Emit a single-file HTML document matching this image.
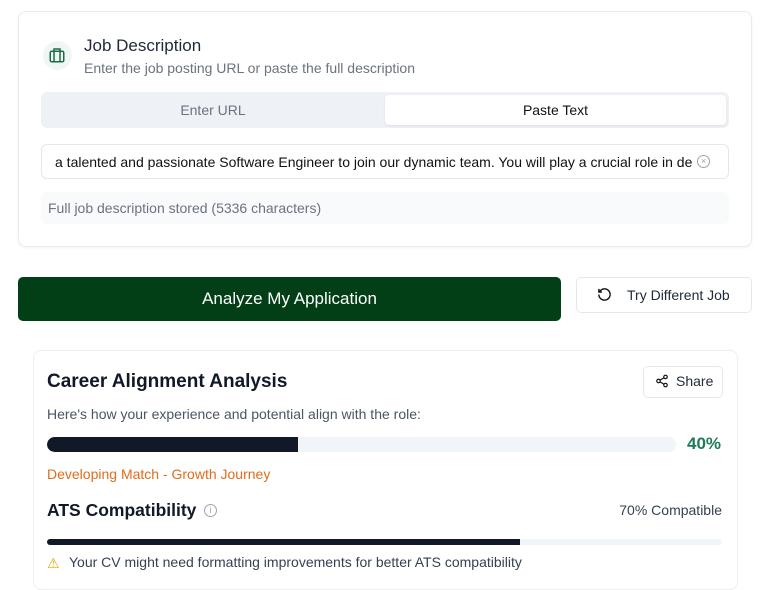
<!DOCTYPE html>
<html><head><style>
*{box-sizing:border-box;margin:0;padding:0}
body{width:768px;height:572px;overflow:hidden;background:#fff;font-family:"Liberation Sans",sans-serif;position:relative;color:#111827}
.a{position:absolute}
</style></head><body>
<div class="a" style="left:18px;top:11px;width:734px;height:236px;border:1px solid #e8ecef;border-radius:8px;box-shadow:0 1px 3px rgba(0,0,0,.05)"></div>
<div class="a" style="left:43px;top:41px;width:29px;height:29px;border-radius:50%;background:#f0f7f3"></div>
<svg class="a" style="left:48px;top:46px" width="18" height="18" viewBox="0 0 24 24" fill="none" stroke="#1d6b4a" stroke-width="2"><rect x="3" y="7" width="18" height="14" rx="2"/><path d="M8 7V4h8v3M8 7v14M16 7v14"/></svg>
<div class="a" style="left:84px;top:36px;font-size:17px;color:#1f2937">Job Description</div>
<div class="a" style="left:84px;top:60px;font-size:14px;color:#6b7280">Enter the job posting URL or paste the full description</div>
<div class="a" style="left:41px;top:92px;width:688px;height:36px;background:#eef2f6;border-radius:6px"></div>
<div class="a" style="left:41px;top:102px;width:344px;text-align:center;font-size:14px;color:#6b7280">Enter URL</div>
<div class="a" style="left:385px;top:95px;width:341px;height:30px;background:#fff;border-radius:4px;box-shadow:0 1px 2px rgba(0,0,0,.08)"></div>
<div class="a" style="left:385px;top:102px;width:341px;text-align:center;font-size:14px;color:#111">Paste Text</div>
<div class="a" style="left:41px;top:144px;width:688px;height:35px;border:1px solid #e5e7eb;border-radius:6px"></div>
<div class="a" style="left:55px;top:154px;width:638px;white-space:nowrap;overflow:hidden;font-size:14px;color:#111">a talented and passionate Software Engineer to join our dynamic team. You will play a crucial role in designing</div>
<div class="a" style="left:697px;top:155px;width:13px;height:13px;border:1px solid #9ca3af;border-radius:50%;font-size:9px;line-height:11px;text-align:center;color:#9ca3af">×</div>
<div class="a" style="left:41px;top:192px;width:688px;height:32px;background:#f8fafc;border-radius:6px"></div>
<div class="a" style="left:48px;top:200px;font-size:14px;color:#6b7280">Full job description stored (5336 characters)</div>
<div class="a" style="left:18px;top:277px;width:543px;height:44px;background:#033f16;border-radius:5px;color:#fff;font-size:17px;text-align:center;line-height:44px">Analyze My Application</div>
<div class="a" style="left:576px;top:277px;width:176px;height:36px;border:1px solid #e5e7eb;border-radius:5px"></div>
<svg class="a" style="left:597px;top:287px" width="15" height="15" viewBox="0 0 24 24" fill="none" stroke="#111" stroke-width="2.2"><path d="M3 12a9 9 0 1 0 3-6.7L3 8M3 3v5h5"/></svg>
<div class="a" style="left:627px;top:287px;font-size:14px;color:#1f2937">Try Different Job</div>
<div class="a" style="left:33px;top:350px;width:705px;height:240px;border:1px solid #eceff2;border-radius:8px"></div>
<div class="a" style="left:47px;top:371px;font-size:19px;font-weight:bold;color:#111827">Career Alignment Analysis</div>
<div class="a" style="left:643px;top:366px;width:80px;height:32px;border:1px solid #e5e7eb;border-radius:5px"></div>
<svg class="a" style="left:655px;top:374px" width="14" height="14" viewBox="0 0 24 24" fill="none" stroke="#111" stroke-width="2"><circle cx="18" cy="5" r="3"/><circle cx="6" cy="12" r="3"/><circle cx="18" cy="19" r="3"/><path d="M8.6 13.5l6.8 4M15.4 6.5l-6.8 4"/></svg>
<div class="a" style="left:676px;top:373px;font-size:14px;color:#1f2937">Share</div>
<div class="a" style="left:47px;top:406px;font-size:14px;color:#4b5563">Here's how your experience and potential align with the role:</div>
<div class="a" style="left:47px;top:437px;width:629px;height:15px;background:#f1f5f9;border-radius:8px;overflow:hidden"><div style="width:251px;height:15px;background:#111827;border-radius:8px 0 0 8px"></div></div>
<div class="a" style="left:687px;top:434px;font-size:17px;font-weight:bold;color:#1e7a5a">40%</div>
<div class="a" style="left:47px;top:466px;font-size:14px;color:#e06c1c">Developing Match - Growth Journey</div>
<div class="a" style="left:47px;top:500px;font-size:17.5px;font-weight:bold;color:#111827">ATS Compatibility</div>
<div class="a" style="left:204px;top:504px;width:13px;height:13px;border:1px solid #9ca3af;border-radius:50%;font-size:9px;line-height:11px;text-align:center;color:#9ca3af">i</div>
<div class="a" style="right:46px;top:502px;font-size:14px;color:#374151">70% Compatible</div>
<div class="a" style="left:47px;top:539px;width:675px;height:6px;background:#f1f5f9;border-radius:3px;overflow:hidden"><div style="width:473px;height:6px;background:#111827"></div></div>
<div class="a" style="left:47px;top:555px;font-size:14px;color:#e0a800">⚠</div>
<div class="a" style="left:69px;top:554px;font-size:14px;color:#374151">Your CV might need formatting improvements for better ATS compatibility</div>
</body></html>
